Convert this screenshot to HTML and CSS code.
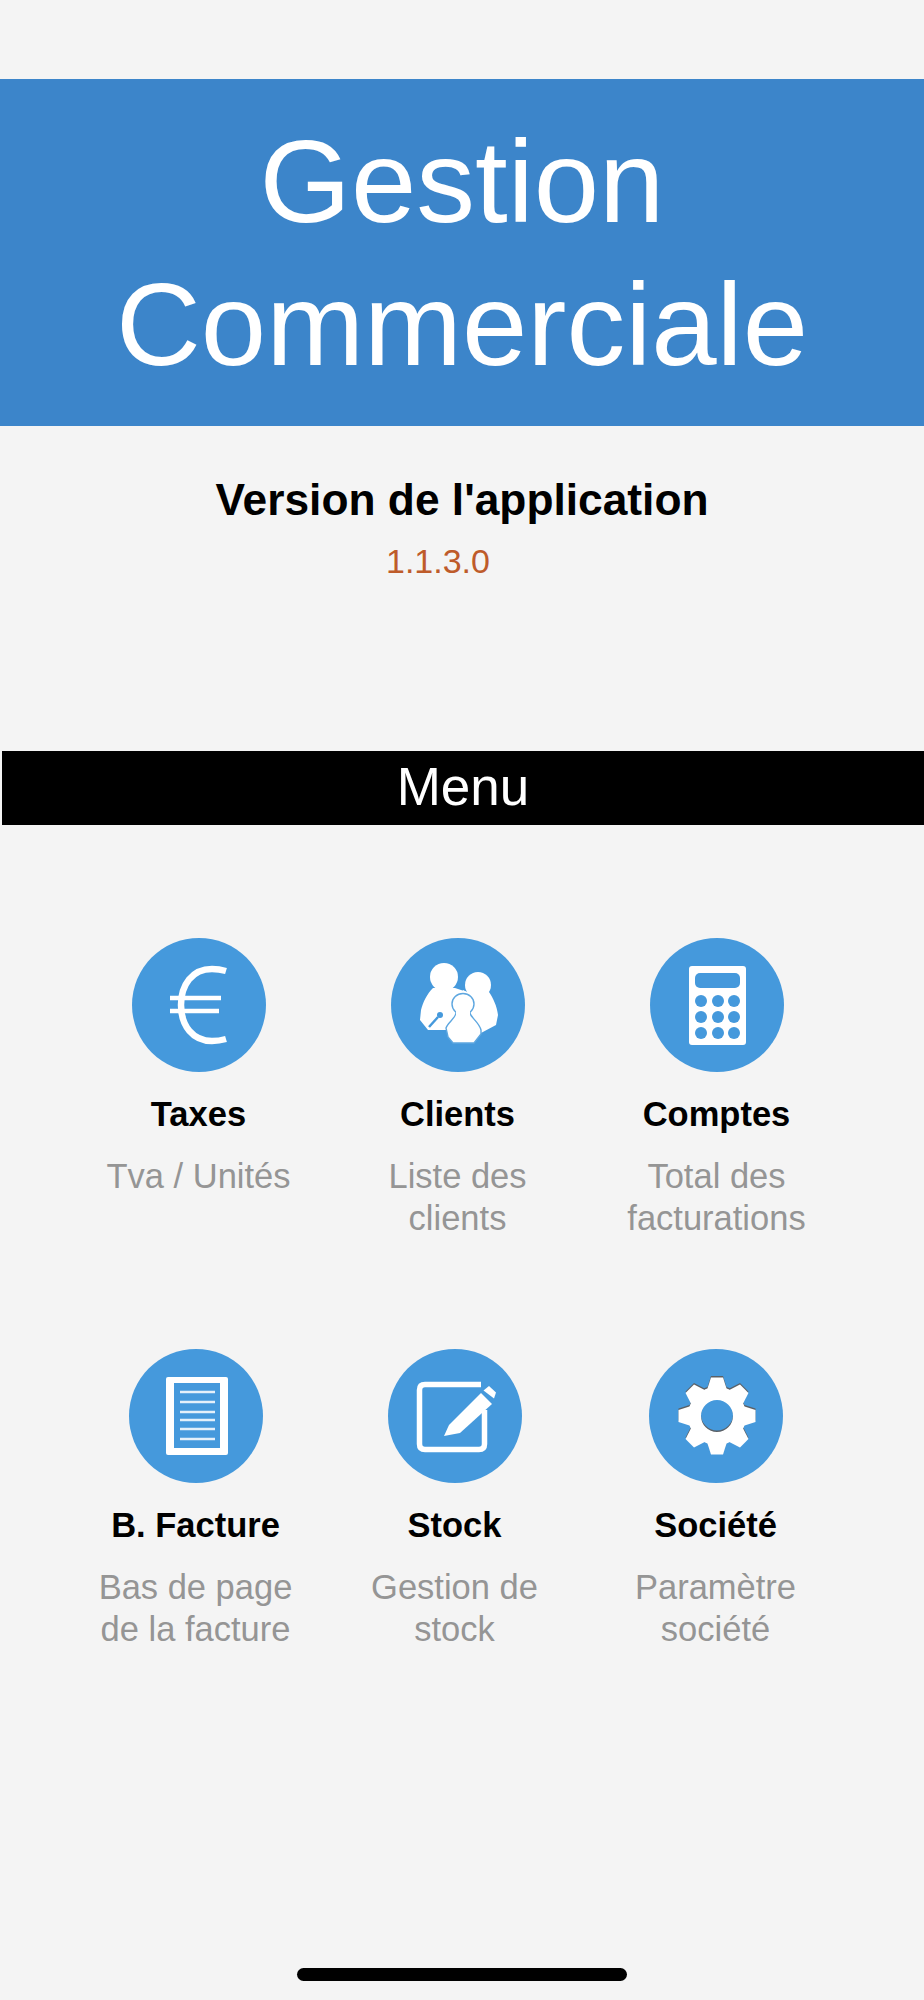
FILE: index.html
```html
<!DOCTYPE html>
<html lang="fr">
<head>
<meta charset="utf-8">
<title>Gestion Commerciale</title>
<link rel="stylesheet" href="styles.css">
</head>
<body>
<svg class="defs" width="0" height="0" aria-hidden="true">
  <defs>
    <g id="gear">
      <circle cx="0" cy="0" r="22.500" class="gear-ring"/>
      <polygon id="tooth" points="-10,-26 -6,-38.5 6,-38.5 10,-26"/>
      <use href="#tooth" transform="rotate(45)"/>
      <use href="#tooth" transform="rotate(90)"/>
      <use href="#tooth" transform="rotate(135)"/>
      <use href="#tooth" transform="rotate(180)"/>
      <use href="#tooth" transform="rotate(225)"/>
      <use href="#tooth" transform="rotate(270)"/>
      <use href="#tooth" transform="rotate(315)"/>
    </g>
  </defs>
</svg>
<main class="page">
  <header class="banner">
    <h1 class="banner-title">Gestion<br>Commerciale</h1>
  </header>
  <section class="version">
    <h2 class="version-label">Version de l'application</h2>
    <p class="version-number">1.1.3.0</p>
  </section>
  <div class="menu-bar">Menu</div>
  <nav class="menu">
    <div class="menu-row">
      <a class="tile">
        <svg class="tile-icon" viewBox="0 0 134 134">
          <circle class="disc" cx="67" cy="67" r="67"/>
          <path class="line" d="M94 33Q87 31 80 31C60 31 49 47 49 67C49 88 61 103 80 103Q87 103 94 101"/>
          <path class="line thin" d="M38 60H89M38 73H87"/>
        </svg>
        <span class="tile-name">Taxes</span>
        <span class="tile-text">Tva / Unités</span>
      </a>
      <a class="tile">
        <svg class="tile-icon" viewBox="0 0 134 134">
          <circle class="disc" cx="67" cy="67" r="67"/>
          <ellipse class="solid" cx="87" cy="47" rx="13" ry="13"/>
          <path class="solid" d="M76 54H98C102 60 106 68 107 77L105 87L90 95L66 70L72 52Z"/>
          <ellipse class="solid" cx="53" cy="39" rx="14" ry="14"/>
          <path class="solid" d="M42 50H64L76 54L72 62L66 92L37 92L29 82L30 72C32 64 36 56 42 50Z"/>
          <path class="key" d="M38 89L47 79"/>
          <circle class="key-head" cx="49" cy="77" r="3"/>
          <ellipse class="solid outlined" cx="72" cy="66" rx="11" ry="10.5"/>
          <path class="solid outlined" d="M65 75H79C80 80 88 84 90 92V96L83 105H62L57 99L55 90C57 84 64 81 65 75Z"/>
          <path class="solid" d="M65 70H79V80H65Z"/>
        </svg>
        <span class="tile-name">Clients</span>
        <span class="tile-text">Liste des<br>clients</span>
      </a>
      <a class="tile">
        <svg class="tile-icon" viewBox="0 0 134 134">
          <circle class="disc" cx="67" cy="67" r="67"/>
          <rect class="solid" x="39" y="28" width="57" height="79" rx="3"/>
          <rect class="cut" x="45" y="35" width="45" height="15" rx="5"/>
          <g class="cut">
            <circle cx="51" cy="63" r="6"/><circle cx="68" cy="63" r="6"/><circle cx="84" cy="63" r="6"/>
            <circle cx="51" cy="79" r="6"/><circle cx="68" cy="79" r="6"/><circle cx="84" cy="79" r="6"/>
            <circle cx="51" cy="95" r="6"/><circle cx="68" cy="95" r="6"/><circle cx="84" cy="95" r="6"/>
          </g>
        </svg>
        <span class="tile-name">Comptes</span>
        <span class="tile-text">Total des<br>facturations</span>
      </a>
    </div>
    <div class="menu-row menu-row-second">
      <a class="tile">
        <svg class="tile-icon" viewBox="0 0 134 134">
          <circle class="disc" cx="67" cy="67" r="67"/>
          <rect class="solid" x="37" y="28" width="62" height="78" rx="2"/>
          <rect class="cut" x="45" y="34" width="46" height="65"/>
          <path class="rule" d="M51 43H86M51 53H86M51 63H86M51 71H86M51 80H86M51 90H86"/>
        </svg>
        <span class="tile-name">B. Facture</span>
        <span class="tile-text">Bas de page<br>de la facture</span>
      </a>
      <a class="tile">
        <svg class="tile-icon" viewBox="0 0 134 134">
          <circle class="disc" cx="67" cy="67" r="67"/>
          <path class="frame" d="M93 35.500H37Q31.500 35.500 31.500 41V95Q31.500 100.500 37 100.500H91Q96.500 100.500 96.500 95V61"/>
          <path class="solid" d="M56 87L61 76L93 44L104 55L72 84Z"/>
          <path class="solid" d="M95.500 41.500L101 37L108 43.500L106 49.500Z"/>
        </svg>
        <span class="tile-name">Stock</span>
        <span class="tile-text">Gestion de<br>stock</span>
      </a>
      <a class="tile">
        <svg class="tile-icon" viewBox="0 0 134 134">
          <circle class="disc" cx="67" cy="67" r="67"/>
          <use class="gear-shade" href="#gear" transform="translate(68 65.500)"/>
          <use class="gear-face" href="#gear" transform="translate(68 67)"/>
        </svg>
        <span class="tile-name">Société</span>
        <span class="tile-text">Paramètre<br>société</span>
      </a>
    </div>
  </nav>
  <div class="home-indicator"></div>
</main>
</body>
</html>
```
FILE: styles.css
```css
* {
  box-sizing: border-box;
}

html,
body {
  margin: 0;
  background: #f4f4f4;
}

.defs {
  position: absolute;
}

.page {
  position: relative;
  height: 2000px;
  padding-top: 79px;
  overflow: hidden;
  font-family: "Liberation Sans", Arial, sans-serif;
  color: #000;
}

.banner {
  height: 347px;
  padding-top: 31px;
  background: #3c85ca;
  text-align: center;
}

.banner-title {
  margin: 0;
  font-size: 117.5px;
  line-height: 143px;
  font-weight: 400;
  color: #fff;
}

.version {
  height: 325px;
  padding-top: 49px;
  text-align: center;
}

.version-label {
  margin: 0;
  font-size: 44.3px;
  line-height: 50px;
  font-weight: 700;
}

.version-number {
  margin: 16px 0 0;
  padding-right: 48px;
  font-size: 34px;
  line-height: 40px;
  color: #be5b2a;
}

.menu-bar {
  height: 74px;
  margin-left: 2px;
  background: #000;
  color: #fff;
  font-size: 53px;
  line-height: 72px;
  text-align: center;
}

.menu {
  padding-top: 113px;
}

.menu-row {
  display: grid;
  grid-template-columns: 259px 259px 259px;
  height: 411px;
  padding-left: 69px;
}

.menu-row-second {
  grid-template-columns: 259px 259px 263px;
  padding-left: 66px;
}

.tile {
  display: flex;
  flex-direction: column;
  align-items: center;
  text-align: center;
}

.tile-icon {
  display: block;
  width: 134px;
  height: 134px;
  filter: blur(0.6px);
}

.tile-name {
  margin-top: 21px;
  font-size: 34.5px;
  line-height: 42px;
  font-weight: 700;
}

.tile-text {
  margin-top: 20px;
  font-size: 34.5px;
  line-height: 42px;
  color: #959595;
}

.disc {
  fill: #4599dc;
}

.solid {
  fill: #fff;
}

.cut {
  fill: #4599dc;
}

.line {
  fill: none;
  stroke: #fff;
  stroke-width: 6.5;
}

.thin {
  stroke-width: 4.5;
}

.outlined {
  stroke: #5ea7e0;
  stroke-width: 1.4;
}

.key {
  fill: none;
  stroke: #4599dc;
  stroke-width: 2.5;
}

.key-head {
  fill: #4599dc;
}

.rule {
  fill: none;
  stroke: #e4f0fa;
  stroke-width: 2.5;
}

.frame {
  fill: none;
  stroke: #fff;
  stroke-width: 5.5;
}

.gear-ring {
  fill: none;
  stroke: currentColor;
  stroke-width: 13;
}

.gear-shade {
  color: #5a6066;
  fill: #5a6066;
}

.gear-face {
  color: #fff;
  fill: #fff;
}

.home-indicator {
  position: absolute;
  left: 297px;
  bottom: 19px;
  width: 330px;
  height: 13px;
  border-radius: 7px;
  background: #000;
}
```
